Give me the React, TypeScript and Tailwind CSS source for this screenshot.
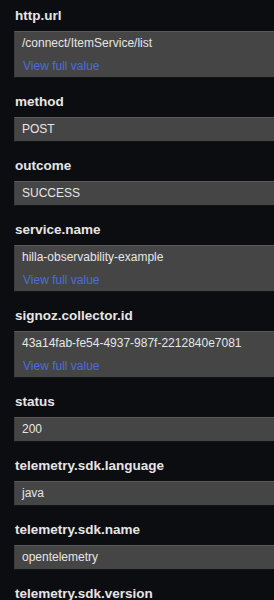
const attributes: { key: string; value: string; long?: boolean }[] = [
  { key: "http.url", value: "/connect/ItemService/list", long: true },
  { key: "method", value: "POST" },
  { key: "outcome", value: "SUCCESS" },
  { key: "service.name", value: "hilla-observability-example", long: true },
  { key: "signoz.collector.id", value: "43a14fab-fe54-4937-987f-2212840e7081", long: true },
  { key: "status", value: "200" },
  { key: "telemetry.sdk.language", value: "java" },
  { key: "telemetry.sdk.name", value: "opentelemetry" },
  { key: "telemetry.sdk.version", value: "1.28.0" },
]

export default function App() {
  return (
    <div
      className="h-[600px] w-full overflow-hidden bg-[#0c0d10]"
      style={{ fontFamily: '"Liberation Sans", Arial, sans-serif' }}
    >
      <div className="w-[340px] pl-[14px] pt-[6px]">
        {attributes.map((attr) => (
          <div key={attr.key} className="mb-[14px]">
            {/* Attribute key */}
            <div className="mb-[5px] h-5 pl-[1px] text-[13.5px] font-bold leading-5 text-[#e6e6e6]">
              {attr.key}
            </div>

            {/* Attribute value box */}
            <div className="border border-t-[#5a5a5a] border-l-[#3a3a3a] border-r-[#3a3a3a] border-b-[#111214] bg-[#454545] pl-[7px] pt-[5px] pb-[5px]">
              <div className="text-[12px] leading-[13px] text-[#e6e6e6]">{attr.value}</div>
              {attr.long && (
                <div className="mt-[10px] -mb-[1px] pl-[1px] text-[12px] leading-[13px] text-[#4c6cdc]">
                  View full value
                </div>
              )}
            </div>
          </div>
        ))}
      </div>
    </div>
  )
}
